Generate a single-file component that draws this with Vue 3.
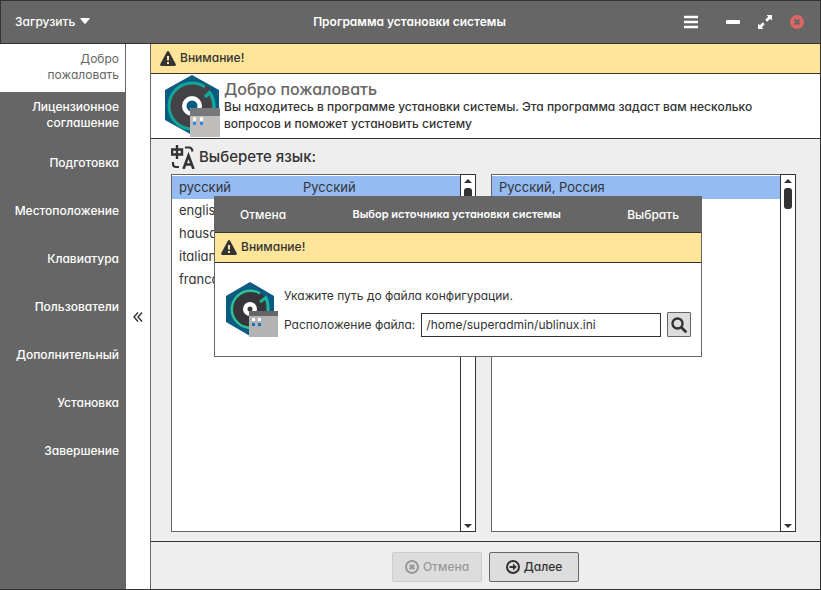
<script setup>
import { ref } from 'vue'

const steps = [
  'Добро пожаловать',
  'Лицензионное соглашение',
  'Подготовка',
  'Местоположение',
  'Клавиатура',
  'Пользователи',
  'Дополнительный',
  'Установка',
  'Завершение',
]
const activeStep = ref(0)
const languages = [
  { id: 'русский', name: 'Русский' },
  { id: 'english', name: 'English' },
  { id: 'hausa', name: 'Hausa' },
  { id: 'italiano', name: 'Italiano' },
  { id: 'francais', name: 'Francais' },
]
const language = ref(0)
const configPath = ref('/home/superadmin/ublinux.ini')
</script>

<template>
  <div class="window">
    <header class="titlebar">
      <button class="load" type="button">
        Загрузить
        <svg width="10" height="6" viewBox="0 0 10 6"><path d="M1 0h8q1 0 .5 1L5.700 5.500q-.7.7-1.400 0L.5 1Q0 0 1 0z" fill="#fff" /></svg>
      </button>
      <h1>Программа установки системы</h1>
      <div class="controls">
        <button type="button" class="menu" aria-label="Меню">
          <svg width="14" height="14" viewBox="0 0 14 14"><path d="M0 2h14M0 7h14M0 12h14" stroke="#fff" stroke-width="2.400" /></svg>
        </button>
        <button type="button" aria-label="Свернуть">
          <svg width="14" height="14" viewBox="0 0 14 14"><rect y="5" width="14" height="4" rx="1" fill="#fff" /></svg>
        </button>
        <button type="button" aria-label="Развернуть">
          <svg width="14" height="14" viewBox="0 0 14 14"><path d="M8.500 0H14v5.500l-1.800-1.800-3 3-1.900-1.900 3-3zM5.500 14H0V8.500l1.800 1.800 3-3 1.900 1.900-3 3z" fill="#fff" /></svg>
        </button>
        <button type="button" aria-label="Закрыть">
          <svg width="14" height="14" viewBox="0 0 14 14"><circle cx="7" cy="7" r="7" fill="#e06666" /><path d="M4.500 4.500l5 5M9.500 4.500l-5 5" stroke="#666" stroke-width="2.400" /></svg>
        </button>
      </div>
    </header>

    <div class="body">
      <nav class="steps">
        <button
          v-for="(step, i) in steps"
          :key="step"
          type="button"
          :class="{ active: i === activeStep }"
          @click="activeStep = i"
        >{{ step }}</button>
      </nav>
      <button class="collapse" type="button" aria-label="Скрыть панель">
        <svg width="10" height="10" viewBox="0 0 10 10"><path d="M5 .5L1 5l4 4.500M9 .5L5 5l4 4.500" fill="none" stroke="#333" stroke-width="1.400" /></svg>
      </button>

      <main>
        <div class="alert">
          <svg width="16" height="15" viewBox="0 0 16 15"><path d="M7 .6q1-1.200 2 0l6.800 12.600q.4 1.400-1 1.800H1.200q-1.400-.4-1-1.800z" fill="#333" /><path d="M8 5v4.500M8 11v2" stroke="#ffe599" stroke-width="2" /></svg>
          <span>Внимание!</span>
        </div>

        <section class="intro">
          <svg width="55" height="62" viewBox="0 0 55 62">
            <path d="M27 0l27 15v30L27 60 0 45V15z" fill="#0b5a82" />
            <circle cx="27" cy="31" r="23" fill="#434247" />
            <path d="M40 50A23 23 0 1 1 40 12" fill="none" stroke="#13a598" stroke-width="3" />
            <path d="M41 10l6 5-3 3-5-4z" fill="#434247" />
            <path d="M40 22l4.500-4.500Q49 23 49 33" fill="none" stroke="#13a598" stroke-width="3.500" />
            <circle cx="27" cy="31" r="10" fill="#fff" />
            <circle cx="27" cy="31" r="5.500" fill="#0b5a82" />
            <path d="M25 62V33h30v29z" fill="#bfbebc" />
            <path d="M25 41v-6q0-2 2-2h26q2 0 2 2v6z" fill="#77787b" />
            <rect x="28" y="42" width="3" height="4" rx="1" fill="#fff" />
            <rect x="35" y="42" width="3" height="4" rx="1" fill="#fff" />
            <path d="M28 47h3v3h-3zM35 47h3v3h-3z" fill="#2f86e8" />
          </svg>
          <div>
            <h2>Добро пожаловать</h2>
            <p>Вы находитесь в программе установки системы. Эта программа задаст вам несколько вопросов и поможет установить систему</p>
          </div>
        </section>

        <section class="content">
          <h3>
            <svg width="24" height="24" viewBox="0 0 24 24" fill="none" stroke="#333"><path d="M1 4.500h10v5H1zM6 0v14" stroke-width="2.400" /><path d="M14 2.500h4q3 0 3.500 4M2 17v2q0 3 3 3h3" stroke-width="2.200" /><path d="M12.500 24l5-13.500 5 13.500M14 19.500h7" stroke-width="2.600" /></svg>
            <span>Выберете язык:</span>
          </h3>
          <div class="lists">
            <div class="list">
              <ul role="listbox" aria-label="Язык">
                <li
                  v-for="(l, i) in languages"
                  :key="l.id"
                  role="option"
                  :aria-selected="i === language"
                  @click="language = i"
                ><span>{{ l.id }}</span><span>{{ l.name }}</span></li>
              </ul>
              <div class="scroll">
                <svg width="8" height="4" viewBox="0 0 8 4"><path d="M4 0l4 4H0z" fill="#333" /></svg>
                <i></i>
                <svg width="8" height="4" viewBox="0 0 8 4"><path d="M4 4l4-4H0z" fill="#333" /></svg>
              </div>
            </div>
            <div class="list">
              <ul role="listbox" aria-label="Регион">
                <li class="single" role="option" aria-selected="true">Русский, Россия</li>
              </ul>
              <div class="scroll">
                <svg width="8" height="4" viewBox="0 0 8 4"><path d="M4 0l4 4H0z" fill="#333" /></svg>
                <i></i>
                <svg width="8" height="4" viewBox="0 0 8 4"><path d="M4 4l4-4H0z" fill="#333" /></svg>
              </div>
            </div>
          </div>
        </section>

        <footer>
          <button type="button" disabled>
            <svg width="14" height="14" viewBox="0 0 14 14"><circle cx="7" cy="7" r="6" fill="none" stroke="#999" stroke-width="2" /><path d="M4.800 4.800l4.400 4.400M9.200 4.800L4.800 9.200" stroke="#999" stroke-width="2.400" /></svg>
            <span>Отмена</span>
          </button>
          <button type="button">
            <svg width="14" height="14" viewBox="0 0 14 14"><circle cx="7" cy="7" r="6" fill="none" stroke="#333" stroke-width="2" /><path d="M3.500 6H7V3.500L10.800 7 7 10.500V8H3.500z" fill="#333" /></svg>
            <span>Далее</span>
          </button>
        </footer>
      </main>
    </div>

    <div class="dialog" role="dialog" aria-labelledby="dialog-title">
      <div class="dialog-bar">
        <button type="button">Отмена</button>
        <h2 id="dialog-title">Выбор источника установки системы</h2>
        <button type="button">Выбрать</button>
      </div>
      <div class="alert">
        <svg width="16" height="15" viewBox="0 0 16 15"><path d="M7 .6q1-1.200 2 0l6.800 12.600q.4 1.400-1 1.800H1.200q-1.400-.4-1-1.800z" fill="#333" /><path d="M8 5v4.500M8 11v2" stroke="#ffe599" stroke-width="2" /></svg>
        <span>Внимание!</span>
      </div>
      <div class="dialog-body">
        <svg width="52" height="55" viewBox="0 0 52 55">
          <path d="M24 0l24 14v26L24 54 0 40V14z" fill="#0b5a82" />
          <circle cx="24" cy="27" r="19" fill="#37363b" />
          <path d="M34 43A18.500 18.500 0 1 1 34 11.500" fill="none" stroke="#2cc295" stroke-width="2.500" />
          <path d="M34 20l6-4.500q2.500 6 2 13.500" fill="none" stroke="#1cb39b" stroke-width="3" />
          <circle cx="24" cy="27" r="7" fill="#fff" />
          <circle cx="24" cy="27" r="2.500" fill="#37363b" />
          <path d="M23 29h29v26H23z" fill="#b3b3b3" />
          <path d="M23 29h29v5H23z" fill="#666" />
          <path d="M26 36h3v3h-3zM32 36h3v3h-3z" fill="#fff" />
          <path d="M26 41h3v3h-3zM32 41h3v3h-3z" fill="#1a6fc4" />
        </svg>
        <div class="fields">
          <p>Укажите путь до файла конфигурации.</p>
          <div class="row">
            <label for="path">Расположение файла:</label>
            <input id="path" v-model="configPath" type="text" />
            <button type="button" aria-label="Обзор">
              <svg width="16" height="16" viewBox="0 0 16 16"><circle cx="6.500" cy="6.500" r="5" fill="none" stroke="#333" stroke-width="2.400" /><path d="M10.500 10.500l4 4" stroke="#333" stroke-width="2.800" stroke-linecap="round" /></svg>
            </button>
          </div>
        </div>
      </div>
    </div>
  </div>
</template>

<style>
body {
  margin: 0;
}
</style>

<style scoped>
.window,
.window * {
  box-sizing: border-box;
}
.window {
  position: relative;
  display: flex;
  flex-direction: column;
  min-height: 100vh;
  border: 1px solid #333;
  border-left: 0;
  background: #fff;
  color: #333;
  font-family: Inter, "Noto Sans", sans-serif;
  font-feature-settings: "cv11";
  font-size: 12px;
  font-weight: 500;
}
h1, h2, h3, p, ul {
  margin: 0;
  padding: 0;
}
svg {
  display: block;
  flex: none;
}
button {
  display: flex;
  align-items: center;
  margin: 0;
  padding: 0;
  border: 0;
  background: none;
  color: inherit;
  font: inherit;
  font-feature-settings: inherit;
}
.titlebar {
  display: grid;
  grid-template-columns: 1fr auto 1fr;
  align-items: center;
  height: 43px;
  padding: 0 16px 0 14px;
  border-bottom: 1px solid #333;
  border-left: 1px solid #333;
  background: #666;
  color: #fff;
}
.load {
  gap: 5px;
  padding-bottom: 2px;
}
h1 {
  padding-bottom: 2px;
  font-size: 12px;
  font-weight: 600;
}
.controls {
  display: flex;
  justify-content: flex-end;
  gap: 18px;
}
.menu {
  margin-right: 10px;
}
.body {
  display: flex;
  flex: 1;
}
.steps {
  width: 126px;
  flex: none;
  background: #666;
}
.steps button {
  justify-content: flex-end;
  width: 100%;
  height: 48px;
  padding: 0 7px 2px 14px;
  color: #fff;
  line-height: 16px;
  text-align: right;
}
.steps .active {
  padding-right: 6px;
  padding-left: 40px;
  border-right: 1px solid #666;
  background: #fff;
  color: #666;
  font-weight: 400;
}
.collapse {
  width: 24px;
  flex: none;
  justify-content: center;
}
main {
  display: flex;
  flex: 1;
  flex-direction: column;
  min-width: 0;
  border-left: 1px solid #666;
  background: #eee;
}
.alert {
  display: flex;
  align-items: center;
  gap: 4px;
  height: 30px;
  padding: 0 9px;
  border-bottom: 1px solid #333;
  background: #ffe599;
}
.alert span,
footer span {
  padding-bottom: 2px;
}
.intro {
  display: flex;
  gap: 4px;
  height: 65px;
  padding: 1px 14px;
  border-bottom: 1px solid #333;
  background: #fff;
}
.intro h2 {
  padding-top: 6px;
  color: #666;
  font-size: 16px;
  font-weight: 500;
  line-height: 17px;
}
.intro p {
  line-height: 17px;
}
.content {
  display: flex;
  flex: 1;
  flex-direction: column;
  padding: 6px 24px 9px 20px;
}
h3 {
  display: flex;
  align-items: center;
  gap: 4px;
  height: 29px;
  padding-bottom: 5px;
  font-size: 15px;
  font-weight: 500;
}
h3 span {
  padding-bottom: 2px;
}
.lists {
  display: flex;
  flex: 1;
  gap: 15px;
}
.list {
  display: flex;
  flex: 1;
  border: 1px solid #666;
  border-right: 0;
  background: #fff;
}
.list ul {
  flex: 1;
  padding-top: 1px;
  list-style: none;
}
.list li {
  display: grid;
  grid-template-columns: 124px 1fr;
  align-items: center;
  height: 23px;
  padding: 0 0 2px 7px;
  font-size: 13px;
  font-weight: 400;
  white-space: nowrap;
}
.list .single {
  grid-template-columns: 1fr;
}
.list li[aria-selected="true"] {
  background: #94bbf2;
}
.scroll {
  display: flex;
  flex-direction: column;
  align-items: center;
  width: 16px;
  margin: -1px 0;
  padding: 4px 0 3px;
  border: 1px solid #333;
}
.scroll i {
  width: 8px;
  height: 21px;
  margin: 5px 0 auto;
  border-radius: 3px;
  background: #333;
}
footer {
  display: flex;
  justify-content: center;
  gap: 7px;
  padding: 10px 0 7px;
  border-top: 1px solid #333;
}
footer button {
  justify-content: center;
  gap: 4px;
  width: 90px;
  height: 30px;
  border: 1px solid #666;
  border-radius: 2px;
  background: #ddd;
}
footer button:disabled {
  border-color: #ccc;
  color: #999;
}
.dialog {
  position: absolute;
  top: 195px;
  left: 214px;
  width: 488px;
  border: 1px solid #666;
  background: #fff;
}
.dialog-bar {
  display: flex;
  align-items: center;
  justify-content: space-between;
  height: 36px;
  padding: 0 22px 0 25px;
  border-bottom: 1px solid #333;
  background: #666;
  color: #fff;
}
.dialog-bar h2 {
  padding-bottom: 2px;
  font-size: 11px;
  font-weight: 600;
}
.dialog .alert {
  padding: 0 6px;
}
.dialog-body {
  display: flex;
  gap: 6px;
  padding: 19px 10px 19px 11px;
  font-weight: 400;
}
.fields {
  flex: 1;
}
.fields p {
  padding-top: 6px;
  line-height: 16px;
}
.row {
  display: flex;
  align-items: center;
  gap: 6px;
  padding-top: 8px;
}
.row label {
  padding-bottom: 1px;
}
.row input {
  flex: 1;
  min-width: 0;
  height: 24px;
  padding: 0 4px 1px;
  border: 1px solid #333;
  border-radius: 0;
  background: #fff;
  color: #333;
  font: inherit;
  font-feature-settings: inherit;
}
.row button {
  justify-content: center;
  width: 24px;
  height: 25px;
  border: 1px solid #666;
  border-radius: 1px;
  background: #ddd;
}
</style>
